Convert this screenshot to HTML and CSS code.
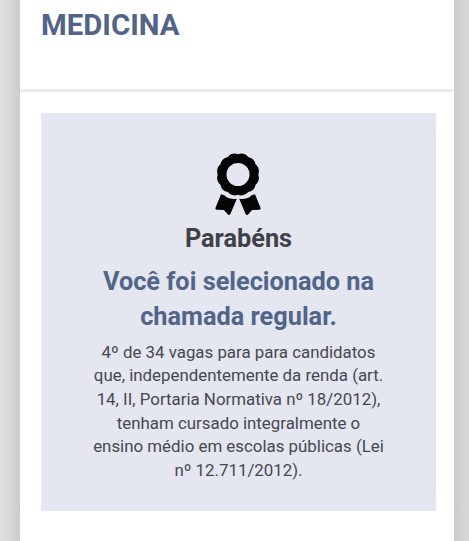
FILE: index.html
```html
<!DOCTYPE html>
<html lang="pt-BR">
<head>
<meta charset="utf-8">
<title>Resultado</title>
<link rel="stylesheet" href="styles.css">
</head>
<body>
<main class="sheet">
  <header class="course"><h1>MEDICINA</h1></header>
  <section class="result">
    <svg class="award" viewBox="0 0 48 64" aria-hidden="true">
      <path fill-rule="evenodd" d="M44.3 22.5A9.5 9.5 0 0 1 41.58 32.65A9.5 9.5 0 0 1 34.15 40.08A9.5 9.5 0 0 1 24 42.8A9.5 9.5 0 0 1 13.85 40.08A9.5 9.5 0 0 1 6.42 32.65A9.5 9.5 0 0 1 3.7 22.5A9.5 9.5 0 0 1 6.42 12.35A9.5 9.5 0 0 1 13.85 4.92A9.5 9.5 0 0 1 24 2.2A9.5 9.5 0 0 1 34.15 4.92A9.5 9.5 0 0 1 41.58 12.35A9.5 9.5 0 0 1 44.3 22.5ZM35.5 22.5A11.5 11.5 0 1 0 12.5 22.5A11.5 11.5 0 1 0 35.5 22.5Z"/>
      <path d="M7 42.3Q10.5 42.5 13 45.5Q17 47.5 22.8 46.7L16.4 62Q15.4 63.8 13.9 62.5L9.9 58L2.8 57.8Q.8 57.5 1.5 55.8ZM41 42.3Q37.5 42.5 35 45.5Q31 47.5 25.2 46.7L31.6 62Q32.6 63.8 34.1 62.5L38.1 58L45.2 57.8Q47.2 57.5 46.5 55.8Z"/>
    </svg>
    <h2 class="greeting">Parabéns</h2>
    <h2 class="status">Você foi selecionado na<br>chamada regular.</h2>
    <p class="details">4º de 34 vagas para para candidatos<br>que, independentemente da renda (art.<br>14, II, Portaria Normativa nº 18/2012),<br>tenham cursado integralmente o<br>ensino médio em escolas públicas (Lei<br>nº 12.711/2012).</p>
  </section>
</main>
</body>
</html>
```
FILE: styles.css
```css
* { box-sizing: border-box; }
body {
  margin: 0;
  height: 541px;
  overflow: hidden;
  padding: 0 15px 0 20px;
  background: linear-gradient(to right, #dedede 0, #d9d9d9 10px, #cbcbcb 20px, #cbcbcb 454px, #d2d2d2 460px, #d8d8d8 469px);
  font-family: Roboto, sans-serif;
}
h1, h2, p { margin: 0; }
.sheet { height: 541px; background: #fff; }
.course {
  height: 92px;
  padding: 8px 21px 0;
  border-bottom: 3px solid #ebebeb;
}
.course h1 {
  font-size: 29.4px;
  line-height: 34px;
  font-weight: 700;
  color: #526488;
}
.result {
  width: 395px;
  height: 398px;
  margin: 21px 0 0 21px;
  padding-top: 39px;
  background: #e4e6f0;
  text-align: center;
}
.award { display: block; width: 48px; height: 64px; margin: 0 0 0 173px; fill: #050506; }
.greeting, .status { font-size: 25.3px; font-weight: 700; }
.greeting { margin-top: 5px; line-height: 36px; color: #404146; }
.status { margin-top: 7px; line-height: 35px; color: #526488; }
.details {
  margin-top: 6.6px;
  font-size: 16.87px;
  line-height: 23.7px;
  color: #464851;
}
```
